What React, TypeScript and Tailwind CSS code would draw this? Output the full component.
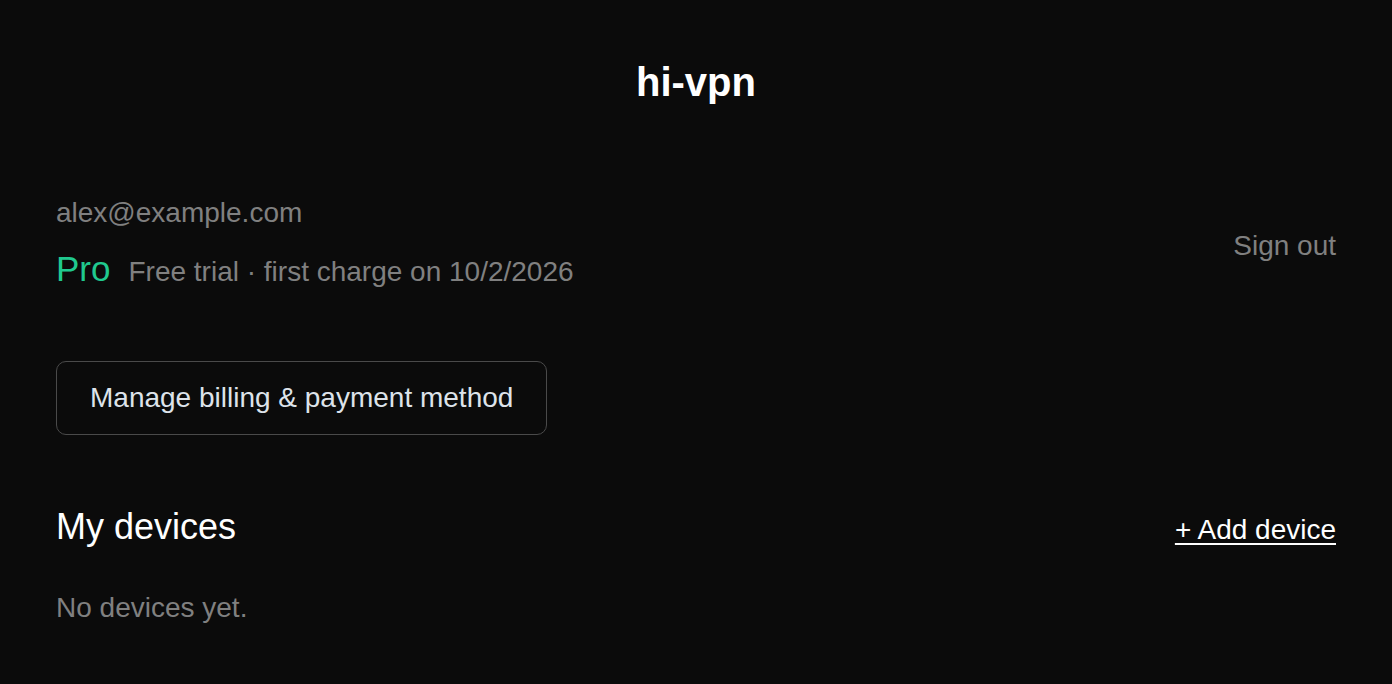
import React from 'react';

export default function App() {
  const handleSignOut = () => {};
  const handleBilling = () => {};

  return (
    <div className="min-h-screen bg-[#0b0b0b] text-white font-['Liberation_Sans',Arial,sans-serif]">
      <header className="h-[164px] flex items-center justify-center">
        <h1 className="text-[40px] leading-[46px] font-bold">hi-vpn</h1>
      </header>

      <main className="px-[56px]">
        <section className="mt-[33px] flex items-center justify-between">
          <div>
            <p className="text-[28px] leading-[32px] text-[#808080]">alex@example.com</p>
            <div className="mt-[20px] flex items-baseline gap-[18px]">
              <span className="text-[35px] leading-[40px] text-[#20c98f]">Pro</span>
              <span className="text-[28px] leading-[32px] text-[#808080]">
                Free trial · first charge on 10/2/2026
              </span>
            </div>
          </div>
          <button onClick={handleSignOut} className="pt-[6px] text-[28px] leading-[32px] text-[#808080]">
            Sign out
          </button>
        </section>

        <button
          onClick={handleBilling}
          className="mt-[72px] block border border-[#4a4a4a] rounded-[10px] px-[33px] py-[20px] text-[28px] leading-[32px] text-[#dde3ea]"
        >
          Manage billing &amp; payment method
        </button>

        <section className="mt-[72px]">
          <div className="flex items-baseline justify-between">
            <h2 className="text-[36px] leading-[40px]">My devices</h2>
            <a href="#" className="text-[28px] leading-[32px] underline underline-offset-[4px]">
              + Add device
            </a>
          </div>
          <p className="mt-[45px] text-[28px] leading-[32px] text-[#808080]">No devices yet.</p>
        </section>
      </main>
    </div>
  );
}
